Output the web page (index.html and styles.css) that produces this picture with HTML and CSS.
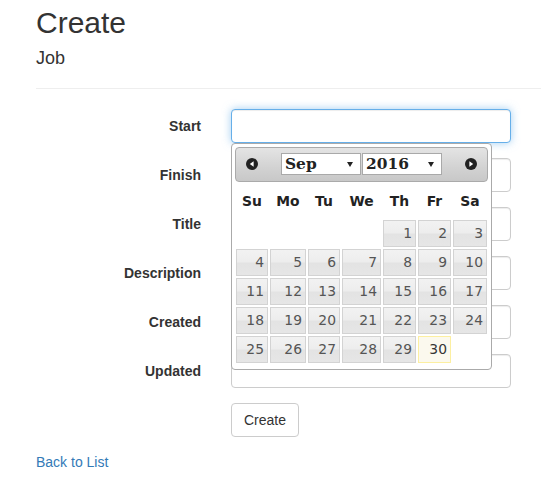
FILE: index.html
```html
<!DOCTYPE html>
<html lang="en">
<head>
<meta charset="utf-8">
<title>Create - Job</title>
<link rel="stylesheet" href="styles.css">
</head>
<body>
<div class="page">
  <h2 class="title">Create</h2>
  <h4 class="subtitle">Job</h4>
  <hr class="rule">
  <form class="form">
    <div class="row">
      <label class="label">Start</label>
      <div class="field field-dp">
        <input class="input input-focus" type="text">
        <div class="datepicker">
          <div class="dp-header">
            <svg class="dp-nav" width="12" height="12" viewBox="0 0 12 12"><circle cx="6" cy="6" r="6" fill="#222"/><polygon points="7.6,3.2 7.6,8.8 3.8,6" fill="#fff"/></svg>
            <div class="dp-title">
              <div class="dp-select">Sep<span class="dp-arrow"></span></div>
              <div class="dp-select">2016<span class="dp-arrow"></span></div>
            </div>
            <svg class="dp-nav" width="12" height="12" viewBox="0 0 12 12"><circle cx="6" cy="6" r="6" fill="#222"/><polygon points="4.4,3.2 4.4,8.8 8.2,6" fill="#fff"/></svg>
          </div>
          <table class="dp-table">
            <colgroup>
              <col class="c1"><col class="c2"><col class="c3"><col class="c4"><col class="c5"><col class="c6"><col class="c7">
            </colgroup>
            <thead>
              <tr><th>Su</th><th>Mo</th><th>Tu</th><th>We</th><th>Th</th><th>Fr</th><th>Sa</th></tr>
            </thead>
            <tbody>
              <tr><td></td><td></td><td></td><td></td><td><a class="day">1</a></td><td><a class="day">2</a></td><td><a class="day">3</a></td></tr>
              <tr><td><a class="day">4</a></td><td><a class="day">5</a></td><td><a class="day">6</a></td><td><a class="day">7</a></td><td><a class="day">8</a></td><td><a class="day">9</a></td><td><a class="day">10</a></td></tr>
              <tr><td><a class="day">11</a></td><td><a class="day">12</a></td><td><a class="day">13</a></td><td><a class="day">14</a></td><td><a class="day">15</a></td><td><a class="day">16</a></td><td><a class="day">17</a></td></tr>
              <tr><td><a class="day">18</a></td><td><a class="day">19</a></td><td><a class="day">20</a></td><td><a class="day">21</a></td><td><a class="day">22</a></td><td><a class="day">23</a></td><td><a class="day">24</a></td></tr>
              <tr><td><a class="day">25</a></td><td><a class="day">26</a></td><td><a class="day">27</a></td><td><a class="day">28</a></td><td><a class="day">29</a></td><td><a class="day day-today">30</a></td><td></td></tr>
            </tbody>
          </table>
        </div>
      </div>
    </div>
    <div class="row">
      <label class="label">Finish</label>
      <div class="field"><input class="input" type="text"></div>
    </div>
    <div class="row">
      <label class="label">Title</label>
      <div class="field"><input class="input" type="text"></div>
    </div>
    <div class="row">
      <label class="label">Description</label>
      <div class="field"><input class="input" type="text"></div>
    </div>
    <div class="row">
      <label class="label">Created</label>
      <div class="field"><input class="input" type="text"></div>
    </div>
    <div class="row">
      <label class="label">Updated</label>
      <div class="field"><input class="input" type="text"></div>
    </div>
    <div class="row">
      <span class="label"></span>
      <div class="field"><button class="btn" type="button">Create</button></div>
    </div>
  </form>
  <div class="back"><a class="link" href="#">Back to List</a></div>
</div>
</body>
</html>
```

FILE: styles.css
```css
* { box-sizing: border-box; }

html, body {
  margin: 0;
  padding: 0;
  background: #fff;
}

body {
  font-family: "Liberation Sans", Arial, sans-serif;
  font-size: 14px;
  line-height: 20px;
  color: #333;
}

.page {
  padding: 6px 0 0 36px;
}

.title {
  margin: 0 0 10px;
  font-size: 30px;
  line-height: 33px;
  font-weight: 500;
}

.subtitle {
  margin: 0;
  font-size: 18px;
  line-height: 19.8px;
  font-weight: 500;
}

.rule {
  margin: 19px 0 20px;
  border: 0;
  border-top: 1px solid #eee;
  height: 0;
}

.form {
  margin: 0;
}

.row {
  display: flex;
  margin-bottom: 15px;
}

.label {
  width: 165px;
  margin-right: 30px;
  padding-top: 7px;
  text-align: right;
  font-weight: bold;
  flex: none;
}

.field {
  position: relative;
  width: 280px;
}

.input {
  display: block;
  width: 280px;
  height: 34px;
  padding: 6px 12px;
  font: inherit;
  color: #555;
  background: #fff;
  border: 1px solid #ccc;
  border-radius: 4px;
  box-shadow: inset 0 1px 1px rgba(0,0,0,.075);
  outline: none;
}

.input-focus {
  border-color: #66afe9;
  box-shadow: inset 0 1px 1px rgba(0,0,0,.075), 0 0 8px rgba(102,175,233,.6);
}

.btn {
  display: inline-block;
  height: 34px;
  padding: 6px 12px;
  font: inherit;
  color: #333;
  background: #fff;
  border: 1px solid #ccc;
  border-radius: 4px;
}

.back {
  padding-bottom: 10px;
}

.link {
  color: #337ab7;
  text-decoration: none;
}

/* datepicker */
.datepicker {
  position: absolute;
  left: 0;
  top: 34px;
  width: 261px;
  padding: 3px 3px 0;
  background: #fff;
  border: 1px solid #aaa;
  border-radius: 4px;
  font-family: "DejaVu Sans", Verdana, sans-serif;
  z-index: 10;
}

.dp-header {
  display: flex;
  align-items: center;
  justify-content: space-between;
  height: 35px;
  padding: 0 10px;
  border: 1px solid #aaa;
  border-radius: 4px;
  background: linear-gradient(#e4e4e4, #d2d2d2 60%, #c8c8c8);
}

.dp-nav {
  display: block;
  flex: none;
}

.dp-title {
  display: flex;
  gap: 1px;
}

.dp-select {
  position: relative;
  width: 80px;
  height: 22px;
  padding-left: 3px;
  background: #fff;
  border: 1px solid #a9a9a9;
  font-family: "DejaVu Serif", "Liberation Serif", serif;
  font-weight: bold;
  font-size: 15.4px;
  line-height: 20px;
  color: #222;
}

.dp-arrow {
  position: absolute;
  right: 7px;
  top: 8px;
  width: 0;
  height: 0;
  border-left: 3px solid transparent;
  border-right: 3px solid transparent;
  border-top: 5px solid #222;
}

.dp-table {
  width: 253px;
  table-layout: fixed;
  border-collapse: collapse;
  margin: 0 0 5px;
  font-size: 13.86px;
}

.c1 { width: 34px; }
.c2 { width: 38px; }
.c3 { width: 34px; }
.c4 { width: 41px; }
.c5 { width: 35px; }
.c6 { width: 35px; }
.c7 { width: 36px; }

.dp-table th {
  height: 37px;
  padding: 2px 0 0;
  text-align: center;
  font-weight: bold;
  color: #222;
  line-height: 20px;
}

.dp-table td {
  padding: 1px;
  border: 0;
}

.day {
  display: block;
  height: 27px;
  padding: 3px 3px 3px 0;
  line-height: 19px;
  text-align: right;
  color: #555;
  border: 1px solid #d3d3d3;
  background: linear-gradient(#f2f2f2 0%, #ededed 48%, #e3e3e3 52%, #e6e6e6 100%);
  text-decoration: none;
}

.day-today {
  border-color: #fcefa1;
  background: #fbf9ee;
  color: #363636;
}
```
